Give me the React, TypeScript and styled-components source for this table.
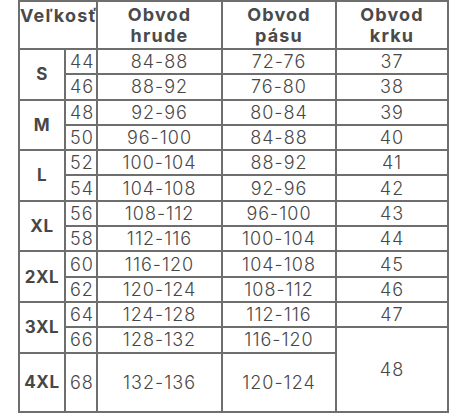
import * as React from 'react';
import styled, { createGlobalStyle } from 'styled-components';

const GlobalStyle = createGlobalStyle`
  html, body {
    margin: 0;
    padding: 0;
    background: #ffffff;
  }
  body {
    font-family: Inter, "Noto Sans", "Liberation Sans", sans-serif;
    color: #444444;
  }
`;

const Page = styled.div`
  width: 460px;
  height: 417px;
  padding-left: 18px;
  box-sizing: border-box;
  background: #fff;
`;

const Table = styled.table`
  border-collapse: collapse;
  table-layout: fixed;
  width: 429px;
`;

const HeadRow = styled.tr`
  height: 48px;
`;

const Row = styled.tr<{ $tall?: boolean }>`
  height: ${({ $tall }): string => ($tall ? '59px' : '25.3px')};
`;

const Cell = styled.td`
  border: 2px solid #6e6e6e;
  padding: 0;
  color: #474747;
`;

const HeadCell = styled(Cell)<{ $top?: boolean }>`
  font-weight: 700;
  font-size: 18px;
  line-height: 21px;
  letter-spacing: 1.2px;
  text-align: center;
  vertical-align: ${({ $top }): string => ($top ? 'top' : 'middle')};
  padding-top: ${({ $top }): string => ($top ? '3px' : '0')};
  color: #4a4a4a;
`;

const SizeCell = styled(Cell)`
  font-weight: 700;
  font-size: 17px;
  text-align: center;
  vertical-align: middle;
  letter-spacing: 0.6px;
`;

const NumCell = styled(Cell)`
  font-weight: 300;
  font-size: 18px;
  text-align: left;
  padding-left: 4px;
  letter-spacing: 1px;
`;

const ValueCell = styled(Cell)`
  font-weight: 300;
  font-size: 18px;
  text-align: center;
  letter-spacing: 1px;
`;

interface IRow {
  size?: string;
  num: string;
  chest: string;
  waist?: string;
  neck?: string;
  neckSpan?: number;
  tall?: boolean;
}

const rows: IRow[] = [
  { size: 'S', num: '44', chest: '84-88', waist: '72-76', neck: '37' },
  { num: '46', chest: '88-92', waist: '76-80', neck: '38' },
  { size: 'M', num: '48', chest: '92-96', waist: '80-84', neck: '39' },
  { num: '50', chest: '96-100', waist: '84-88', neck: '40' },
  { size: 'L', num: '52', chest: '100-104', waist: '88-92', neck: '41' },
  { num: '54', chest: '104-108', waist: '92-96', neck: '42' },
  { size: 'XL', num: '56', chest: '108-112', waist: '96-100', neck: '43' },
  { num: '58', chest: '112-116', waist: '100-104', neck: '44' },
  { size: '2XL', num: '60', chest: '116-120', waist: '104-108', neck: '45' },
  { num: '62', chest: '120-124', waist: '108-112', neck: '46' },
  { size: '3XL', num: '64', chest: '124-128', waist: '112-116', neck: '47' },
  { num: '66', chest: '128-132', waist: '116-120', neck: '48', neckSpan: 2 },
  { size: '4XL', num: '68', chest: '132-136', waist: '120-124', tall: true },
];

export default function App(): JSX.Element {
  return (
    <Page>
      <GlobalStyle />
      <Table>
        <colgroup>
          <col style={{ width: 46 }} />
          <col style={{ width: 32 }} />
          <col style={{ width: 125 }} />
          <col style={{ width: 114 }} />
          <col style={{ width: 112 }} />
        </colgroup>
        <tbody>
          <HeadRow>
            <HeadCell colSpan={2} $top>Veľkosť</HeadCell>
            <HeadCell>Obvod<br />hrude</HeadCell>
            <HeadCell>Obvod<br />pásu</HeadCell>
            <HeadCell>Obvod<br />krku</HeadCell>
          </HeadRow>
          {rows.map((r) => (
            <Row key={r.num} $tall={r.tall}>
              {r.size && <SizeCell rowSpan={r.tall ? 1 : 2}>{r.size}</SizeCell>}
              <NumCell>{r.num}</NumCell>
              <ValueCell>{r.chest}</ValueCell>
              <ValueCell>{r.waist}</ValueCell>
              {r.neck && <ValueCell rowSpan={r.neckSpan ?? 1}>{r.neck}</ValueCell>}
            </Row>
          ))}
        </tbody>
      </Table>
    </Page>
  );
}
